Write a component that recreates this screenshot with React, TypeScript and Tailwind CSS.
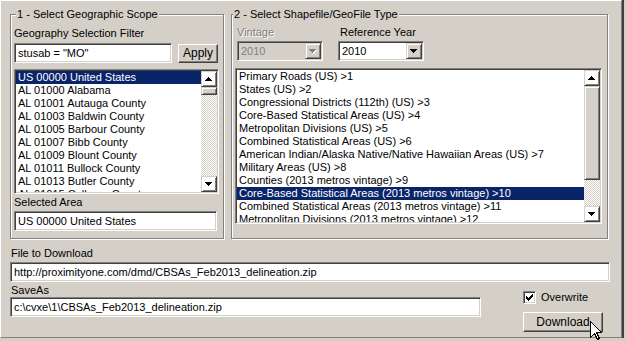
import React from 'react';

// Classic Win2k 3D edges
const sunken =
  'border border-t-[#808080] border-l-[#808080] border-b-white border-r-white shadow-[inset_1px_1px_0_#404040,inset_-1px_-1px_0_#d4d0c8]';
const raised =
  'border border-t-[#d4d0c8] border-l-[#d4d0c8] border-b-[#404040] border-r-[#404040] shadow-[inset_1px_1px_0_#fff,inset_-1px_-1px_0_#808080]';
const pushButton =
  'border border-t-white border-l-white border-b-[#404040] border-r-[#404040] shadow-[inset_-1px_-1px_0_#808080]';

function Arrow({ dir, disabled = false }: { dir: 'up' | 'down'; disabled?: boolean }) {
  const d =
    dir === 'up'
      ? 'M3 0h1v1h-1z M2 1h3v1h-3z M1 2h5v1h-5z M0 3h7v1h-7z'
      : 'M0 0h7v1h-7z M1 1h5v1h-5z M2 2h3v1h-3z M3 3h1v1h-1z';
  return (
    <svg width="8" height="5" viewBox="0 0 8 5" shapeRendering="crispEdges">
      {disabled && <path d={d} fill="#fff" transform="translate(1 1)" />}
      <path d={d} fill={disabled ? '#808080' : '#000'} />
    </svg>
  );
}

function ScrollBar({ thumbTop, thumbHeight }: { thumbTop: number; thumbHeight: number }) {
  const checker =
    'bg-[repeating-conic-gradient(#ffffff_0%_25%,#d4d0c8_0%_50%)] bg-size-[2px_2px]';
  return (
    <div className="w-[16px] h-full flex flex-col shrink-0">
      <div className={`${raised} h-[16px] flex items-center justify-center`}>
        <Arrow dir="up" />
      </div>
      {thumbTop > 0 && <div className={checker} style={{ height: thumbTop }} />}
      <div className={`${raised} bg-[#d4d0c8]`} style={{ height: thumbHeight }} />
      <div className={`${checker} flex-1`} />
      <div className={`${raised} h-[16px] flex items-center justify-center`}>
        <Arrow dir="down" />
      </div>
    </div>
  );
}

function ListBox({
  items,
  selected,
  className,
  thumbHeight,
}: {
  items: string[];
  selected: number;
  className: string;
  thumbHeight: number;
}) {
  return (
    <div className={`${sunken} bg-white p-px flex ${className}`}>
      <div className="flex-1 overflow-hidden">
        {items.map((item, i) => (
          <div
            key={item}
            className={`h-[13px] leading-[13px] pl-[2px] whitespace-nowrap ${
              i === selected ? 'bg-[#0a246a] text-white' : ''
            }`}
          >
            {item}
          </div>
        ))}
      </div>
      <ScrollBar thumbTop={0} thumbHeight={thumbHeight} />
    </div>
  );
}

function TextBox({ value, className }: { value: string; className: string }) {
  return (
    <div className={`${sunken} bg-white h-[20px] flex items-center pl-[3px] whitespace-nowrap overflow-hidden ${className}`}>
      {value}
    </div>
  );
}

function Combo({ value, disabled = false }: { value: string; disabled?: boolean }) {
  return (
    <div
      className={`${sunken} h-[20px] w-[86px] flex items-center p-px ${
        disabled ? 'bg-[#d4d0c8] text-[#808080]' : 'bg-white'
      }`}
    >
      <span className="flex-1 pl-[2px]">{value}</span>
      <div className={`${raised} bg-[#d4d0c8] w-[16px] h-full flex items-center justify-center`}>
        <Arrow dir="down" disabled={disabled} />
      </div>
    </div>
  );
}

function Group({
  title,
  titleLeft,
  className,
  children,
}: {
  title: string;
  titleLeft: string;
  className: string;
  children: React.ReactNode;
}) {
  return (
    <div className={`relative border border-[#808080] shadow-[1px_1px_0_#fff,inset_1px_1px_0_#fff] ${className}`}>
      <span className={`absolute top-[-7px] ${titleLeft} bg-[#d4d0c8] px-px whitespace-nowrap`}>{title}</span>
      {children}
    </div>
  );
}

export default function App() {
  const areas = [
    'US 00000 United States',
    'AL 01000 Alabama',
    'AL 01001 Autauga County',
    'AL 01003 Baldwin County',
    'AL 01005 Barbour County',
    'AL 01007 Bibb County',
    'AL 01009 Blount County',
    'AL 01011 Bullock County',
    'AL 01013 Butler County',
    'AL 01015 Calhoun County',
  ];

  const fileTypes = [
    'Primary Roads (US) >1',
    'States (US) >2',
    'Congressional Districts (112th) (US) >3',
    'Core-Based Statistical Areas (US) >4',
    'Metropolitan Divisions (US) >5',
    'Combined Statistical Areas (US) >6',
    'American Indian/Alaska Native/Native Hawaiian Areas (US) >7',
    'Military Areas (US) >8',
    'Counties (2013 metros vintage) >9',
    'Core-Based Statistical Areas (2013 metros vintage) >10',
    'Combined Statistical Areas (2013 metros vintage) >11',
    'Metropolitan Divisions (2013 metros vintage) >12',
  ];

  return (
    <div className="relative w-[626px] h-[341px] overflow-hidden bg-[#d4d0c8] font-['Liberation_Sans',Arial,sans-serif] text-[11px] leading-[13px] text-black">
      <div className="w-[622px] h-[338px] border-t border-l border-t-white border-l-white border-r border-r-[#808080] border-b border-b-[#808080] shadow-[1px_0_0_#404040,2px_0_0_#404040] pt-[13px] pl-[9px]">
        <div className="flex gap-[7px]">
          <Group title="1 - Select Geographic Scope" titleLeft="left-[5px]" className="w-[214px] h-[225px] pl-[3px] pt-[12px]">
            <div className="h-[13px]">Geography Selection Filter</div>
            <div className="flex items-start mt-[3px]">
              <TextBox value={'stusab = "MO"'} className="w-[158px]" />
              <button className={`${pushButton} bg-[#d4d0c8] w-[40px] h-[19px] ml-[6px] mt-px text-[12px]`}>Apply</button>
            </div>
            <ListBox items={areas} selected={0} className="w-[205px] h-[125px] mt-[6px]" thumbHeight={8} />
            <div className="h-[13px] mt-[2px]">Selected Area</div>
            <TextBox value="US 00000 United States" className="w-[203px] mt-[2px]" />
          </Group>

          <Group title="2 - Select Shapefile/GeoFile Type" titleLeft="left-[1px]" className="w-[377px] h-[225px] pl-[3px] pt-[11px]">
            <div className="flex">
              <div className="ml-[2px] w-[86px]">
                <div className="h-[13px] text-[#808080] [text-shadow:1px_1px_0_#fff]">Vintage</div>
                <div className="mt-[2px]">
                  <Combo value="2010" disabled />
                </div>
              </div>
              <div className="ml-[15px] w-[86px]">
                <div className="h-[13px] pl-[2px]">Reference Year</div>
                <div className="mt-[2px]">
                  <Combo value="2010" />
                </div>
              </div>
            </div>
            <ListBox items={fileTypes} selected={9} className="w-[367px] h-[156px] mt-[7px]" thumbHeight={94} />
          </Group>
        </div>

        <div className="h-[13px] mt-[8px] pl-px">File to Download</div>
        <TextBox value="http://proximityone.com/dmd/CBSAs_Feb2013_delineation.zip" className="w-[600px] mt-[2px]" />

        <div className="flex items-start">
          <div className="w-[471px]">
            <div className="h-[13px] mt-[2px] pl-px">SaveAs</div>
            <TextBox value="c:\cvxe\1\CBSAs_Feb2013_delineation.zip" className="w-[471px]" />
          </div>
          <div className="ml-[42px]">
            <div className="flex items-center mt-[9px] h-[13px]">
              <div className={`${sunken} bg-white w-[13px] h-[13px] flex items-center justify-center`}>
                <svg width="7" height="7" viewBox="0 0 7 7" shapeRendering="crispEdges">
                  <path d="M6 0h1v3h-1z M5 1h1v3h-1z M4 2h1v3h-1z M3 3h1v3h-1z M2 4h1v3h-1z M1 3h1v3h-1z M0 2h1v3h-1z" fill="#000" />
                </svg>
              </div>
              <span className="ml-[5px]">Overwrite</span>
            </div>
            <button className={`${pushButton} bg-[#d4d0c8] w-[80px] h-[20px] mt-[8px] text-[12px]`}>Download</button>
          </div>
        </div>
      </div>

      {/* mouse pointer over the Download button */}
      <svg className="absolute left-[590px] top-[321px]" width="13" height="20" viewBox="0 0 13 20">
        <path
          d="M0.5 0.5 L0.5 16.5 L4.5 12.5 L7.5 18.5 L9.5 17.5 L6.5 11.5 L11.5 11.5 Z"
          fill="#fff"
          stroke="#000"
          strokeWidth="1"
          shapeRendering="crispEdges"
        />
      </svg>
    </div>
  );
}
